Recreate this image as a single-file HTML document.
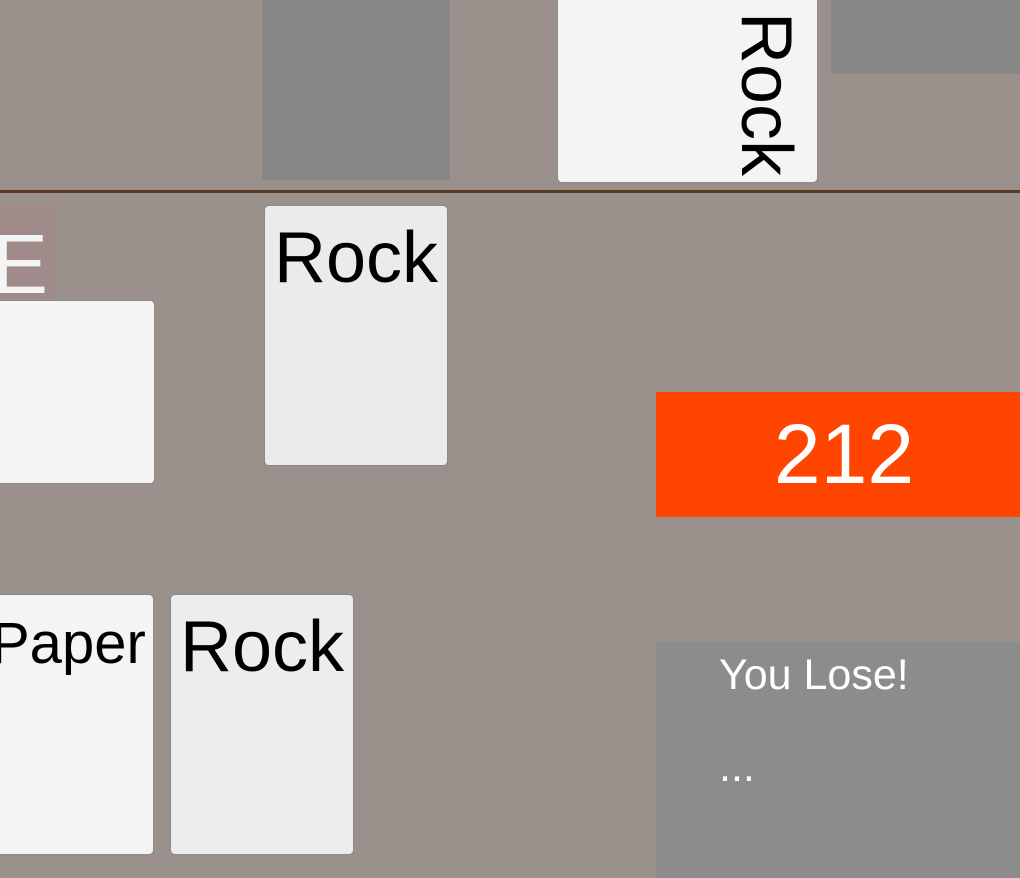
<!DOCTYPE html><html><head><style>
body{margin:0;width:1020px;height:878px;background:#9a918c;position:relative;overflow:hidden;font-family:"Liberation Sans",sans-serif}
div{position:absolute;box-sizing:border-box}
.c{border:1px solid #8a8a8a;border-radius:5px;background:#f4f4f4;color:#000;font-size:72px;line-height:1}
</style></head><body>
<div style="left:262px;top:0;width:188px;height:180px;background:#878787"></div>
<div style="left:831px;top:0;width:189px;height:74px;background:#878787"></div>
<div class="c" style="left:557px;top:-6px;width:261px;height:189px;border-top:none"></div>
<div style="left:684px;top:64px;width:164px;height:60px;transform:rotate(90deg);font-size:72px;line-height:60px;color:#000;text-align:center">Rock</div>
<div style="left:0;top:190px;width:1020px;height:3px;background:#5a3c22"></div>
<div style="left:0;top:205px;width:55px;height:93px;background:#a08a8a"></div>
<div style="left:-8px;top:222px;color:#f4f4f4;font-size:84px;line-height:1">E</div>
<div class="c" style="left:-6px;top:300px;width:161px;height:184px;background:#f5f5f5"></div>
<div class="c" style="left:264px;top:205px;width:184px;height:261px;background:#ebebeb;text-align:center;padding-top:16px">Rock</div>
<div class="c" style="left:-10px;top:594px;width:164px;height:261px;text-align:right;padding-top:20px;padding-right:8px;font-size:58px">Paper</div>
<div class="c" style="left:170px;top:594px;width:184px;height:261px;background:#ededed;text-align:center;padding-top:16px">Rock</div>
<div style="left:656px;top:392px;width:364px;height:125px;background:#ff4500;color:#fff;font-size:84px;line-height:125px;text-align:center;padding-left:12px">212</div>
<div style="left:656px;top:642px;width:364px;height:236px;background:#8c8c8c;color:#fff;font-size:43px;padding:8px 0 0 63px;line-height:1.2">You Lose!<div style="left:63px;top:100px">...</div></div>
</body></html>
